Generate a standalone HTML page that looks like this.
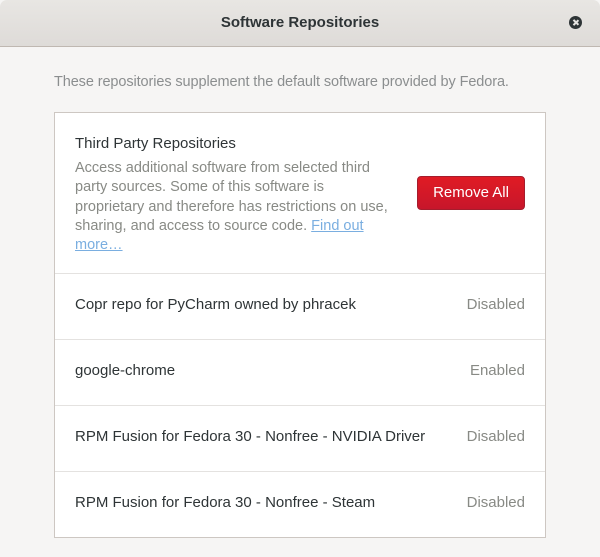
<!DOCTYPE html>
<html><head><style>
*{margin:0;padding:0;box-sizing:border-box}
body{width:600px;height:557px;background:#f6f5f4;font-family:"Liberation Sans",sans-serif;position:relative;overflow:hidden;color:#2e3436}
.hdr{position:absolute;left:0;top:0;width:600px;height:47px;background:linear-gradient(#e8e6e3,#dedbd8);border-bottom:1px solid #bfb8b1;border-radius:7px 7px 0 0}
.title{position:absolute;top:14px;width:100%;text-align:center;font-weight:bold;font-size:15px;color:#2e3436}
.close{position:absolute;left:569px;top:16px;width:13px;height:13px;border-radius:50%;background:#2e3436}
.close:before,.close:after{content:"";position:absolute;left:6px;top:3px;width:1.6px;height:7px;background:#e6e4e1;transform:rotate(45deg)}
.close:after{transform:rotate(-45deg)}
.intro{position:absolute;left:54px;top:74px;font-size:14.5px;color:#8b8e8f;letter-spacing:-0.1px}
.panel{position:absolute;left:54px;top:112px;width:492px;height:426px;background:#fff;border:1px solid #cdc7c2}
.row{position:absolute;left:0;width:490px;border-top:1px solid #e4e2e0;height:66px}
.row .n{position:absolute;left:20px;top:22px;font-size:15px;color:#2e3436}
.row .s{position:absolute;right:20px;top:22px;font-size:15px;color:#888a85}
.tp{position:absolute;left:20px;top:22px;font-size:15px}
.desc{position:absolute;left:20px;top:46px;width:322px;font-size:14.5px;line-height:19.3px;color:#888a85}
.desc a{color:#7aaee0;text-decoration:underline}
.btn{position:absolute;left:362px;top:63px;width:108px;height:34px;background:linear-gradient(#e01b24,#c7162b);border:1px solid #a51d2d;border-radius:4px;color:#fff;font-size:15px;text-align:center;line-height:32px}
</style></head><body>
<div class="hdr"><div class="title">Software Repositories</div><div class="close"></div></div>
<div class="intro">These repositories supplement the default software provided by Fedora.</div>
<div class="panel">
<div class="tp">Third Party Repositories</div>
<div class="desc">Access additional software from selected third party sources. Some of this software is proprietary and therefore has restrictions on use, sharing, and access to source code. <a>Find out more…</a></div>
<div class="btn">Remove All</div>
<div class="row" style="top:160px"><div class="n">Copr repo for PyCharm owned by phracek</div><div class="s">Disabled</div></div>
<div class="row" style="top:226px"><div class="n">google-chrome</div><div class="s">Enabled</div></div>
<div class="row" style="top:292px"><div class="n">RPM Fusion for Fedora 30 - Nonfree - NVIDIA Driver</div><div class="s">Disabled</div></div>
<div class="row" style="top:358px"><div class="n">RPM Fusion for Fedora 30 - Nonfree - Steam</div><div class="s">Disabled</div></div>
</div>
</body></html>
